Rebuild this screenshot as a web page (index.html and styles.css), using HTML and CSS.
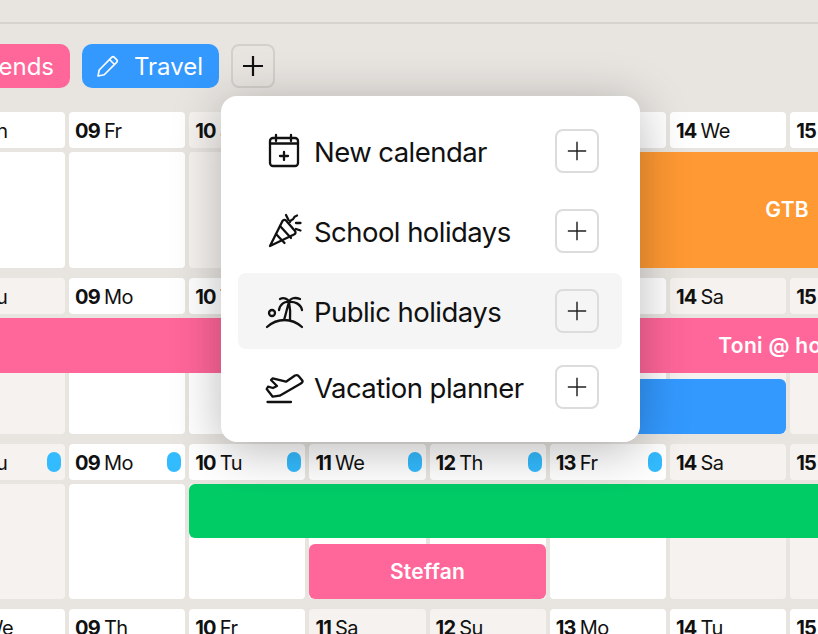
FILE: index.html
```html
<!DOCTYPE html>
<html lang="en">
<head>
<meta charset="utf-8">
<title>Calendar</title>
<link rel="stylesheet" href="styles.css">
</head>
<body>
<svg class="defs" width="0" height="0" aria-hidden="true">
  <symbol id="plus" viewBox="0 0 24 24"><path d="M12 2v20M2 12h20"/></symbol>
  <symbol id="pencil" viewBox="0 0 22 22"><path d="M1 21l1.200-6L14.600 2.400a2 2 0 0 1 2.800 0l2.200 2.200a2 2 0 0 1 0 2.800L7.200 19.800z"/><path d="M12.500 4.500l5 5"/></symbol>
</svg>
<div class="page">
  <header class="topbar"></header>
  <nav class="toolbar">
    <button class="chip chip-pink"><svg class="chip-icon"><use href="#pencil"/></svg>Friends</button>
    <button class="chip chip-blue"><svg class="chip-icon"><use href="#pencil"/></svg>Travel</button>
    <button class="add-chip"><svg class="add-chip-icon"><use href="#plus"/></svg></button>
  </nav>
  <main class="calendar">
    <section class="week">
      <div class="day"><b>08</b> Th</div><div class="day"><b>09</b> Fr</div><div class="day off"><b>10</b> Sa</div><div class="day off"><b>11</b> Su</div><div class="day"><b>12</b> Mo</div><div class="day"><b>13</b> Tu</div><div class="day"><b>14</b> We</div><div class="day"><b>15</b> Th</div><div class="day"><b>16</b> Fr</div>
      <div class="cell c1"></div><div class="cell c2"></div><div class="cell off c3"></div><div class="cell off c4"></div><div class="cell c5"></div><div class="cell c6"></div><div class="cell c7"></div><div class="cell c8"></div><div class="cell c9"></div>
      <div class="event orange ev-gtb">GTB</div>
    </section>
    <section class="week">
      <div class="day off"><b>08</b> Su</div><div class="day"><b>09</b> Mo</div><div class="day"><b>10</b> Tu</div><div class="day"><b>11</b> We</div><div class="day"><b>12</b> Th</div><div class="day"><b>13</b> Fr</div><div class="day off"><b>14</b> Sa</div><div class="day off"><b>15</b> Su</div><div class="day"><b>16</b> Mo</div>
      <div class="cell off c1"></div><div class="cell c2"></div><div class="cell c3"></div><div class="cell c4"></div><div class="cell c5"></div><div class="cell c6"></div><div class="cell off c7"></div><div class="cell off c8"></div><div class="cell c9"></div>
      <div class="event pink ev-toni">Toni @ home</div>
      <div class="event blue ev-trip"></div>
    </section>
    <section class="week week-compact">
      <div class="day off"><b>08</b> Su<i class="dot"></i></div><div class="day"><b>09</b> Mo<i class="dot"></i></div><div class="day"><b>10</b> Tu<i class="dot"></i></div><div class="day"><b>11</b> We<i class="dot"></i></div><div class="day"><b>12</b> Th<i class="dot"></i></div><div class="day"><b>13</b> Fr<i class="dot"></i></div><div class="day off"><b>14</b> Sa</div><div class="day off"><b>15</b> Su</div><div class="day"><b>16</b> Mo</div>
      <div class="cell off c1"></div><div class="cell c2"></div><div class="cell c3"></div><div class="cell c4"></div><div class="cell c5"></div><div class="cell c6"></div><div class="cell off c7"></div><div class="cell off c8"></div><div class="cell c9"></div>
      <div class="event green ev-green"></div>
      <div class="event pink ev-steffan">Steffan</div>
    </section>
    <section class="week">
      <div class="day"><b>08</b> We</div><div class="day"><b>09</b> Th</div><div class="day"><b>10</b> Fr</div><div class="day off"><b>11</b> Sa</div><div class="day off"><b>12</b> Su</div><div class="day"><b>13</b> Mo</div><div class="day"><b>14</b> Tu</div><div class="day"><b>15</b> We</div><div class="day"><b>16</b> Th</div>
    </section>
  </main>
  <aside class="menu">
    <div class="menu-row">
      <svg class="menu-icon" viewBox="0 0 36 36"><rect x="4" y="5" width="28" height="28" rx="3"/><path d="M4 10.500h28M10 2v6M25 2v6"/><path d="M18 19v8M14 23h8"/></svg>
      <span class="menu-label">New calendar</span>
      <button class="menu-add"><svg class="menu-add-icon"><use href="#plus"/></svg></button>
    </div>
    <div class="menu-row">
      <svg class="menu-icon" viewBox="0 0 36 36"><path d="M4 33l12.500-25c1-1.500 2.500-1.500 3.500-.5l9 10.500c1 1.500.5 3-1 3.500z"/><path d="M10 21l8.500 9M14 13l11 12"/><path d="M20 2l2.500 5M24 9c0-3 3-1.500 3.500-3.500s2-2.500 3.500-3M30 10h4.500M30 16l4.500 1.500"/></svg>
      <span class="menu-label">School holidays</span>
      <button class="menu-add"><svg class="menu-add-icon"><use href="#plus"/></svg></button>
    </div>
    <div class="menu-row menu-row-active">
      <svg class="menu-icon" viewBox="0 0 36 36"><path d="M1 34c5-4.500 11-7 17.500-7S31 29.500 36 34"/><circle cx="6" cy="20" r="3"/><path d="M23 9c1 5 1.500 11 1 18M18 27c2-6 3-12 5-18"/><path d="M23 9c-4-1-9 2-10 8M23 9c-1-3-5-5-9-3M23 9c1-4 6-5 11-3M23 9c5-1 12 2 13 8"/></svg>
      <span class="menu-label">Public holidays</span>
      <button class="menu-add"><svg class="menu-add-icon"><use href="#plus"/></svg></button>
    </div>
    <div class="menu-row">
      <svg class="menu-icon" viewBox="0 0 36 36"><path d="M36.500 11.700L33 7.500c-1-1.500-2.500-1.500-4-1L20 12.700 6.700 9.300 5 11l6 6-4 2-5-1.300L.7 20l6 7.700 7-1L34 15c2-1 3-2 2.500-3.300z"/><path d="M1.500 33H25"/></svg>
      <span class="menu-label">Vacation planner</span>
      <button class="menu-add"><svg class="menu-add-icon"><use href="#plus"/></svg></button>
    </div>
  </aside>
</div>
</body>
</html>
```
FILE: styles.css
```css
* { box-sizing: border-box; }
html, body { margin: 0; padding: 0; }
body { font-family: Inter, "Liberation Sans", sans-serif; color: #111; background: #e8e5e1; }
.defs { position: absolute; }
.page { position: relative; width: 818px; height: 634px; overflow: hidden; background: #e8e5e1; }
.topbar { height: 24px; border-bottom: 2px solid #d6d3ce; }
.toolbar { display: flex; gap: 12px; margin: 20px 0 24px -83px; height: 44px; }
button { font: inherit; padding: 0; border: 0; background: none; }
.chip { display: flex; align-items: center; justify-content: flex-end; gap: 15px; height: 44px; padding: 0 16px 0 0; border-radius: 10px; color: #fff; font-size: 24px; white-space: nowrap; flex: none; }
.chip-pink { width: 153px; background: #ff6699; }
.chip-blue { width: 137px; background: #3399ff; }
.chip-icon { width: 22px; height: 22px; fill: none; stroke: #fff; stroke-width: 1.6; stroke-linejoin: round; }
.add-chip { display: flex; align-items: center; justify-content: center; width: 44px; height: 44px; border: 2px solid #d3d0cb; border-radius: 8px; flex: none; }
.add-chip-icon { width: 24px; height: 24px; fill: none; stroke: #111; stroke-width: 2.2; }
.calendar { margin-left: -51.2px; display: flex; flex-direction: column; gap: 10px; width: 1078px; }
.week { display: grid; grid-template-columns: repeat(9, 116.2px); column-gap: 4px; grid-template-rows: 36px 4px 55px 6px 55px; }
.week-compact { grid-template-rows: 36px 4px 54px 6px 55px; }
.day { grid-row: 1; display: flex; align-items: center; gap: 4px; padding: 1px 0 0 6px; background: #fff; border-radius: 4px; font-size: 20px; letter-spacing: -0.5px; white-space: nowrap; position: relative; }
.day b { font-weight: 700; letter-spacing: -0.8px; }
.off { background: #f5f2ef; }
.dot { position: absolute; right: 4px; top: 8px; width: 14px; height: 20px; border-radius: 7px; background: #33bbff; }
.cell { grid-row: 3 / 6; background: #fff; border-radius: 4px; }
.cell.off { background: #f5f2ef; }
.c1 { grid-column: 1; } .c2 { grid-column: 2; } .c3 { grid-column: 3; } .c4 { grid-column: 4; } .c5 { grid-column: 5; } .c6 { grid-column: 6; } .c7 { grid-column: 7; } .c8 { grid-column: 8; } .c9 { grid-column: 9; }
.event { display: flex; align-items: center; justify-content: center; color: #fff; font-weight: 600; font-size: 21px; letter-spacing: 0.3px; border-radius: 6px; white-space: nowrap; z-index: 1; }
.orange { background: #ff9933; }
.pink { background: #ff6699; }
.blue { background: #3399ff; }
.green { background: #00cc66; }
.ev-gtb { grid-column: 6 / 10; grid-row: 3 / 6; padding: 0 2px 2px 0; }
.ev-toni { grid-column: 1 / 10; grid-row: 3; justify-content: flex-end; padding-right: 173px; }
.ev-trip { grid-column: 5 / 8; grid-row: 5; }
.ev-green { grid-column: 3 / 10; grid-row: 3; }
.ev-steffan { grid-column: 4 / 6; grid-row: 5; }
.menu { position: absolute; left: 221px; top: 96px; width: 419px; height: 346px; padding: 17px 18px 17px 17px; background: #fff; border-radius: 16px; box-shadow: 0 8px 50px rgba(0, 0, 0, 0.28); z-index: 2; }
.menu-row { display: flex; align-items: center; height: 76px; margin-bottom: 4px; padding: 0 23px 0 28px; border-radius: 8px; }
.menu-row-active { background: #f5f5f5; margin-bottom: 0; }
.menu-icon { width: 36px; height: 36px; flex: none; fill: none; stroke: #111; stroke-width: 2.3; stroke-linecap: round; stroke-linejoin: round; overflow: visible; }
.menu-label { flex: 1; margin-left: 12px; padding-top: 2px; font-size: 27.5px; letter-spacing: -0.55px; white-space: nowrap; }
.menu-add { display: flex; align-items: center; justify-content: center; width: 44px; height: 44px; flex: none; border: 2px solid #dcdcdc; border-radius: 8px; }
.menu-add-icon { width: 22px; height: 22px; fill: none; stroke: #222; stroke-width: 1.6; }
```
